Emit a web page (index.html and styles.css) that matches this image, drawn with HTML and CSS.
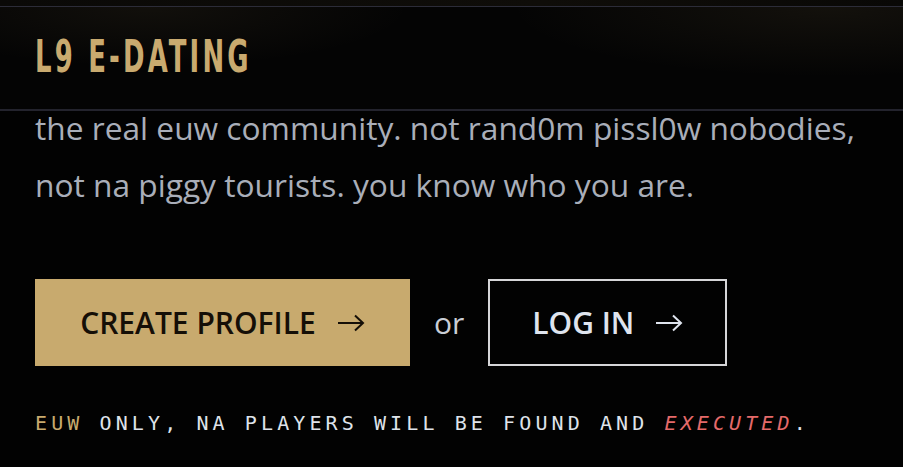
FILE: index.html
```html
<!DOCTYPE html>
<html lang="en">
<head>
    <meta charset="UTF-8">
    <meta name="viewport" content="width=device-width, initial-scale=1.0">
    <title>L9 E-Dating</title>
    <link rel="stylesheet" href="styles.css">
</head>
<body>
    <div class="top-strip"></div>

    <!-- Sticky header -->
    <header class="site-header">
        <h1 class="logo"><span>L9 E-DATING</span></h1>
    </header>

    <main class="hero">
        <p class="hero-text">the real euw community. not rand0m pissl0w nobodies, not na piggy tourists. you know who you are.</p>

        <div class="cta-row">
            <a class="btn btn-gold" href="#">CREATE PROFILE
                <svg class="arrow" viewBox="0 0 28 18" width="28" height="18"><path d="M1 9H26M18 1.5L26 9L18 16.5" fill="none" stroke="currentColor" stroke-width="2"/></svg>
            </a>
            <span class="or">or</span>
            <a class="btn btn-outline" href="#">LOG IN
                <svg class="arrow" viewBox="0 0 28 18" width="28" height="18"><path d="M1 9H26M18 1.5L26 9L18 16.5" fill="none" stroke="currentColor" stroke-width="2"/></svg>
            </a>
        </div>

        <p class="warning"><span class="gold">EUW</span> ONLY, NA PLAYERS WILL BE FOUND AND <em class="red">EXECUTED</em>.</p>
    </main>
</body>
</html>
```

FILE: styles.css
```css
* {
    margin: 0;
    padding: 0;
    box-sizing: border-box;
}

body {
    background: #020202;
    font-family: 'Open Sans', 'Noto Sans', sans-serif;
    height: 100vh;
    overflow: hidden;
}

.top-strip {
    height: 6px;
    background: linear-gradient(to right, #0a0907, #0f0d09 60%, #090806);
}

.site-header {
    position: sticky;
    top: 0;
    z-index: 10;
    height: 105px;
    display: flex;
    align-items: center;
    padding-left: 35px;
    border-top: 1px solid #2c2c38;
    border-bottom: 2px solid #23232d;
    background:
        radial-gradient(ellipse 260px 60px at 150px 0, rgba(200, 170, 110, 0.07), transparent),
        radial-gradient(ellipse 320px 70px at 830px 0, rgba(200, 170, 110, 0.08), transparent),
        #040404;
}

.logo span {
    display: inline-block;
    font-family: 'Liberation Sans Narrow', 'DejaVu Sans Condensed', sans-serif;
    font-weight: 700;
    font-size: 45px;
    letter-spacing: 5px;
    color: #c9aa6f;
    transform: scaleX(0.64);
    transform-origin: left center;
    margin-top: -4px;
}

.hero {
    padding: 0 35px;
}

.hero-text {
    margin-top: -12px;
    font-size: 31.7px;
    line-height: 57px;
    color: #a9aeb9;
    max-width: 840px;
}

.cta-row {
    display: flex;
    align-items: center;
    gap: 24px;
    margin-top: 66px;
}

.btn {
    display: flex;
    align-items: center;
    justify-content: center;
    gap: 21px;
    height: 87px;
    font-size: 30px;
    font-weight: 600;
    text-decoration: none;
}

.btn-gold {
    width: 375px;
    background: #c8aa6e;
    color: #150f07;
}

.btn-outline {
    width: 239px;
    border: 2px solid #d6d6d8;
    color: #dfe4ee;
}

.arrow {
    flex-shrink: 0;
}

.or {
    font-size: 30px;
    color: #c9ced6;
}

.warning {
    margin-top: 45px;
    font-family: 'DejaVu Sans Mono', 'Liberation Mono', monospace;
    font-size: 20px;
    letter-spacing: 4.1px;
    color: #dfe3ea;
}

.gold {
    color: #c8aa6e;
}

.red {
    color: #e56a6a;
}
```
